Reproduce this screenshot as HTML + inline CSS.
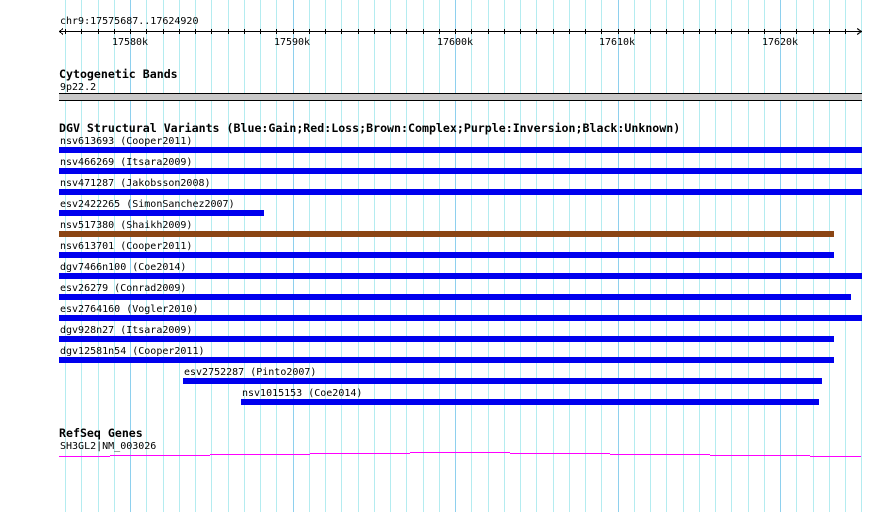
<!DOCTYPE html>
<html><head><style>
html,body{margin:0;padding:0;background:#fff;width:890px;height:512px;overflow:hidden}
svg text{font-family:"DejaVu Sans Mono","Liberation Mono",monospace;font-size:10px;fill:#000}
.b{font-weight:bold;font-size:11.6px}
</style></head><body>
<svg width="890" height="512" xmlns="http://www.w3.org/2000/svg" shape-rendering="crispEdges">
<path stroke="#b4ecf0" fill="none" d="M65.5 0V512M81.5 0V512M98.5 0V512M114.5 0V512M146.5 0V512M163.5 0V512M179.5 0V512M195.5 0V512M211.5 0V512M228.5 0V512M244.5 0V512M260.5 0V512M276.5 0V512M309.5 0V512M325.5 0V512M341.5 0V512M358.5 0V512M374.5 0V512M390.5 0V512M406.5 0V512M423.5 0V512M439.5 0V512M471.5 0V512M488.5 0V512M504.5 0V512M520.5 0V512M536.5 0V512M553.5 0V512M569.5 0V512M585.5 0V512M601.5 0V512M634.5 0V512M650.5 0V512M666.5 0V512M683.5 0V512M699.5 0V512M715.5 0V512M731.5 0V512M748.5 0V512M764.5 0V512M796.5 0V512M813.5 0V512M829.5 0V512M845.5 0V512M861.5 0V512"/>
<path stroke="#8ed0ee" fill="none" d="M130.5 0V512M293.5 0V512M455.5 0V512M618.5 0V512M780.5 0V512"/>
<text x="60" y="24">chr9:17575687..17624920</text>
<line x1="59" y1="31.5" x2="862" y2="31.5" stroke="#000"/>
<path d="M63 28.5 L59.5 31.5 L63 34.5 M857 28.5 L861.5 31.5 L857 34.5" stroke="#000" fill="none"/>
<path stroke="#000" fill="none" d="M65.5 29V34M81.5 29V34M98.5 29V34M114.5 29V34M130.5 29V34M146.5 29V34M163.5 29V34M179.5 29V34M195.5 29V34M211.5 29V34M228.5 29V34M244.5 29V34M260.5 29V34M276.5 29V34M293.5 29V34M309.5 29V34M325.5 29V34M341.5 29V34M358.5 29V34M374.5 29V34M390.5 29V34M406.5 29V34M423.5 29V34M439.5 29V34M455.5 29V34M471.5 29V34M488.5 29V34M504.5 29V34M520.5 29V34M536.5 29V34M553.5 29V34M569.5 29V34M585.5 29V34M601.5 29V34M618.5 29V34M634.5 29V34M650.5 29V34M666.5 29V34M683.5 29V34M699.5 29V34M715.5 29V34M731.5 29V34M748.5 29V34M764.5 29V34M780.5 29V34M796.5 29V34M813.5 29V34M829.5 29V34M845.5 29V34"/>
<text x="130" y="45" text-anchor="middle">17580k</text>
<text x="292" y="45" text-anchor="middle">17590k</text>
<text x="455" y="45" text-anchor="middle">17600k</text>
<text x="617" y="45" text-anchor="middle">17610k</text>
<text x="780" y="45" text-anchor="middle">17620k</text>

<text class="b" x="59" y="78">Cytogenetic Bands</text>
<text x="60" y="90">9p22.2</text>
<rect x="59" y="93" width="803" height="8" fill="#c8c8c8"/>
<rect x="59" y="93" width="803" height="1" fill="#000"/>
<rect x="59" y="100" width="803" height="1" fill="#000"/>

<text class="b" x="59" y="132">DGV Structural Variants (Blue:Gain;Red:Loss;Brown:Complex;Purple:Inversion;Black:Unknown)</text>

<text x="60" y="144">nsv613693 (Cooper2011)</text><rect x="59" y="147" width="803" height="6" fill="#0000ee"/>
<text x="60" y="165">nsv466269 (Itsara2009)</text><rect x="59" y="168" width="803" height="6" fill="#0000ee"/>
<text x="60" y="186">nsv471287 (Jakobsson2008)</text><rect x="59" y="189" width="803" height="6" fill="#0000ee"/>
<text x="60" y="207">esv2422265 (SimonSanchez2007)</text><rect x="59" y="210" width="205" height="6" fill="#0000ee"/>
<text x="60" y="228">nsv517380 (Shaikh2009)</text><rect x="59" y="231" width="775" height="6" fill="#8b4513"/>
<text x="60" y="249">nsv613701 (Cooper2011)</text><rect x="59" y="252" width="775" height="6" fill="#0000ee"/>
<text x="60" y="270">dgv7466n100 (Coe2014)</text><rect x="59" y="273" width="803" height="6" fill="#0000ee"/>
<text x="60" y="291">esv26279 (Conrad2009)</text><rect x="59" y="294" width="792" height="6" fill="#0000ee"/>
<text x="60" y="312">esv2764160 (Vogler2010)</text><rect x="59" y="315" width="803" height="6" fill="#0000ee"/>
<text x="60" y="333">dgv928n27 (Itsara2009)</text><rect x="59" y="336" width="775" height="6" fill="#0000ee"/>
<text x="60" y="354">dgv12581n54 (Cooper2011)</text><rect x="59" y="357" width="775" height="6" fill="#0000ee"/>
<text x="184" y="375">esv2752287 (Pinto2007)</text><rect x="183" y="378" width="639" height="6" fill="#0000ee"/>
<text x="242" y="396">nsv1015153 (Coe2014)</text><rect x="241" y="399" width="578" height="6" fill="#0000ee"/>

<text class="b" x="59" y="437">RefSeq Genes</text>
<text x="60" y="449">SH3GL2|NM_003026</text>
<path d="M59 456.5H110M110 455.5H210M210 454.5H310M310 453.5H410M410 452.5H510M510 453.5H610M610 454.5H710M710 455.5H810M810 456.5H861" stroke="#ff00ff" fill="none"/>
</svg>
</body></html>
